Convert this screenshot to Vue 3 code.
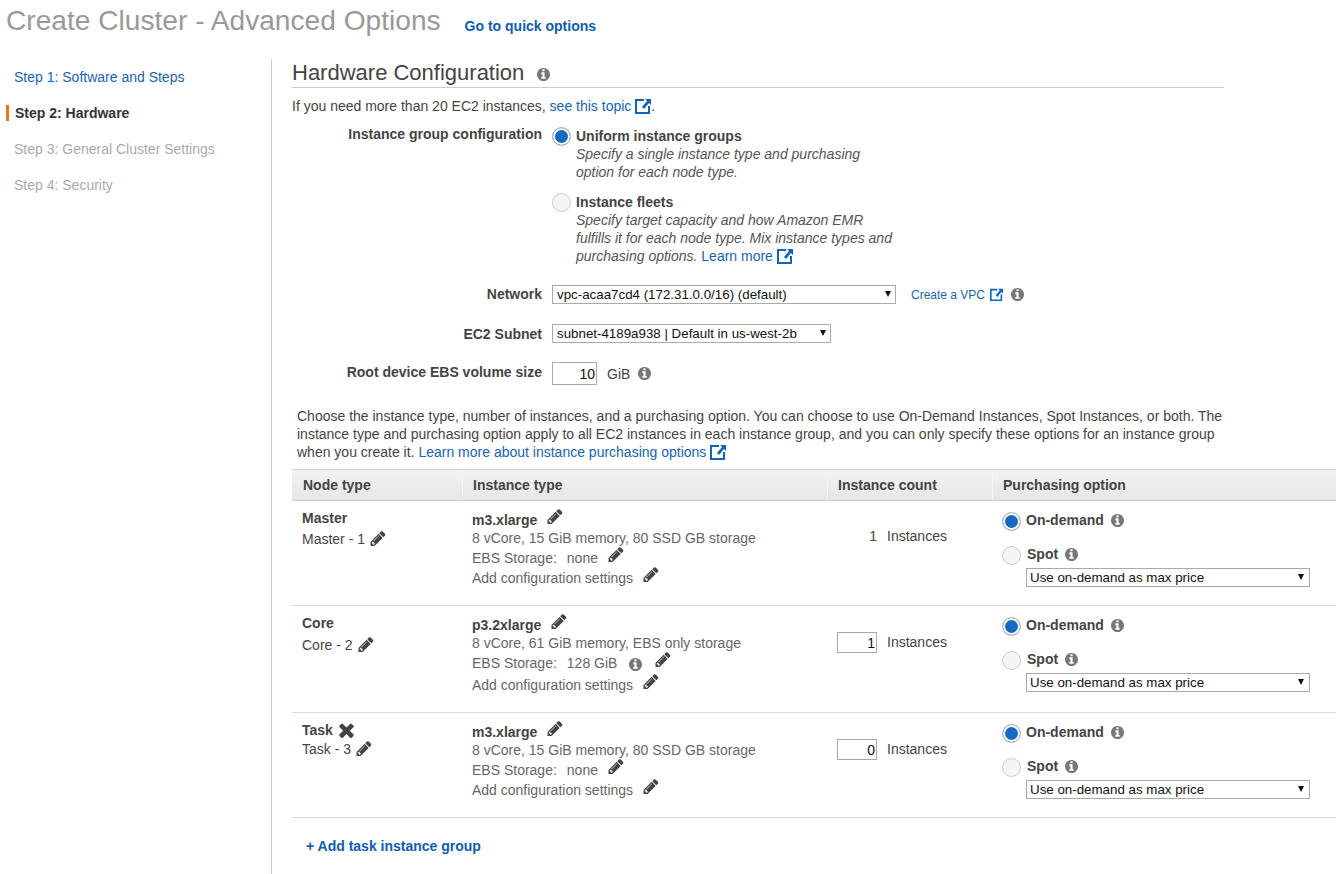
<template>
  <div class="page">
    <header class="top">
      <h1>Create Cluster - Advanced Options</h1>
      <a class="quick">Go to quick options</a>
    </header>

    <div class="layout">
      <nav class="steps">
        <a
          v-for="s in steps"
          :key="s.label"
          class="step"
          :class="s.state"
        >{{ s.label }}</a>
      </nav>

      <main class="content">
        <div class="section-head">
          <h2>Hardware Configuration</h2>
          <svg class="info head-info" viewBox="128 128 1536 1536"><path :d="infoPath" /></svg>
        </div>
        <p class="limit">
          If you need more than 20 EC2 instances, <a class="link">see this topic</a>
          <svg class="ext" viewBox="0 0 16 16"><path :d="extPath" /></svg>.
        </p>

        <div class="form-row group-row">
          <label class="field-label">Instance group configuration</label>
          <div class="options">
            <div class="option">
              <input class="radio" type="radio" name="group" checked />
              <div>
                <div class="opt-title">Uniform instance groups</div>
                <div class="opt-desc">Specify a single instance type and purchasing<br />option for each node type.</div>
              </div>
            </div>
            <div class="option second">
              <input class="radio" type="radio" name="group" />
              <div>
                <div class="opt-title">Instance fleets</div>
                <div class="opt-desc">
                  Specify target capacity and how Amazon EMR<br />
                  fulfills it for each node type. Mix instance types and<br />
                  purchasing options. <a class="link upright">Learn more</a>
                  <svg class="ext" viewBox="0 0 16 16"><path :d="extPath" /></svg>
                </div>
              </div>
            </div>
          </div>
        </div>

        <div class="form-row network-row">
          <label class="field-label">Network</label>
          <div class="select-wrap network">
            <select><option>vpc-acaa7cd4 (172.31.0.0/16) (default)</option></select>
          </div>
          <a class="link small">Create a VPC</a>
          <svg class="ext small-ext" viewBox="0 0 16 16"><path :d="extPath" /></svg>
          <svg class="info vpc-info" viewBox="128 128 1536 1536"><path :d="infoPath" /></svg>
        </div>

        <div class="form-row subnet-row">
          <label class="field-label">EC2 Subnet</label>
          <div class="select-wrap subnet">
            <select><option>subnet-4189a938 | Default in us-west-2b</option></select>
          </div>
        </div>

        <div class="form-row root-row">
          <label class="field-label">Root device EBS volume size</label>
          <input class="num root-num" value="10" />
          <span class="unit">GiB</span>
          <svg class="info" viewBox="128 128 1536 1536"><path :d="infoPath" /></svg>
        </div>

        <p class="intro">
          Choose the instance type, number of instances, and a purchasing option. You can choose to use On-Demand Instances, Spot Instances, or both. The
          instance type and purchasing option apply to all EC2 instances in each instance group, and you can only specify these options for an instance group
          when you create it. <a class="link">Learn more about instance purchasing options</a>
          <svg class="ext" viewBox="0 0 16 16"><path :d="extPath" /></svg>
        </p>

        <div class="table">
          <div class="thead">
            <div class="col-node">Node type</div>
            <div class="col-type">Instance type</div>
            <div class="col-count">Instance count</div>
            <div class="col-buy">Purchasing option</div>
          </div>

          <div
            v-for="n in nodes"
            :key="n.name"
            class="tr"
            :style="{ height: n.height + 'px' }"
          >
            <div class="col-node">
              <div class="node-name">
                {{ n.name }}
                <svg v-if="n.removable" class="remove" viewBox="302 238 1188 1316"><path :d="timesPath" /></svg>
              </div>
              <div class="node-sub" :style="{ marginTop: n.subGap + 'px' }">
                {{ n.sub }}
                <svg class="pencil" viewBox="128 128 1536 1536"><path :d="pencilPath" /></svg>
              </div>
            </div>

            <div class="col-type">
              <div class="type-name">
                {{ n.type }}
                <svg class="pencil" viewBox="128 128 1536 1536"><path :d="pencilPath" /></svg>
              </div>
              <div class="spec">{{ n.spec }}</div>
              <div class="ebs" :class="{ tall: n.ebsInfo }">
                <span>EBS Storage:</span>
                <span class="ebs-val">{{ n.ebs }}</span>
                <svg v-if="n.ebsInfo" class="info ebs-info" viewBox="128 128 1536 1536"><path :d="infoPath" /></svg>
                <svg class="pencil" viewBox="128 128 1536 1536"><path :d="pencilPath" /></svg>
              </div>
              <div class="conf">
                Add configuration settings
                <svg class="pencil" viewBox="128 128 1536 1536"><path :d="pencilPath" /></svg>
              </div>
            </div>

            <div class="col-count" :class="{ editable: !n.fixed }">
              <span v-if="n.fixed" class="fixed-count">{{ n.count }}</span>
              <input v-else class="num count-num" :value="n.count" />
              <span class="unit">Instances</span>
            </div>

            <div class="col-buy">
              <div class="buy-line">
                <input class="radio" type="radio" :name="'buy' + n.name" checked />
                <span class="buy-label">On-demand</span>
                <svg class="info" viewBox="128 128 1536 1536"><path :d="infoPath" /></svg>
              </div>
              <div class="buy-line spot">
                <input class="radio" type="radio" :name="'buy' + n.name" />
                <span class="buy-label">Spot</span>
                <svg class="info" viewBox="128 128 1536 1536"><path :d="infoPath" /></svg>
              </div>
              <div class="select-wrap price">
                <select><option>Use on-demand as max price</option></select>
              </div>
            </div>
          </div>
        </div>

        <a class="add-group">+ Add task instance group</a>
      </main>
    </div>
  </div>
</template>

<script setup>
const steps = [
  { label: 'Step 1: Software and Steps', state: 'done' },
  { label: 'Step 2: Hardware', state: 'active' },
  { label: 'Step 3: General Cluster Settings', state: 'todo' },
  { label: 'Step 4: Security', state: 'todo' }
]

const nodes = [
  {
    name: 'Master',
    sub: 'Master - 1',
    type: 'm3.xlarge',
    spec: '8 vCore, 15 GiB memory, 80 SSD GB storage',
    ebs: 'none',
    count: 1,
    fixed: true,
    subGap: 2,
    height: 105
  },
  {
    name: 'Core',
    sub: 'Core - 2',
    type: 'p3.2xlarge',
    spec: '8 vCore, 61 GiB memory, EBS only storage',
    ebs: '128 GiB',
    ebsInfo: true,
    count: 1,
    subGap: 3,
    height: 107
  },
  {
    name: 'Task',
    sub: 'Task - 3',
    type: 'm3.xlarge',
    spec: '8 vCore, 15 GiB memory, 80 SSD GB storage',
    ebs: 'none',
    count: 0,
    removable: true,
    subGap: 0,
    height: 105
  }
]

const infoPath =
  'M1152 1376v-160q0-14-9-23t-23-9h-96v-512q0-14-9-23t-23-9h-320q-14 0-23 9t-9 23v160q0 14 9 23t23 9h96v320h-96q-14 0-23 9t-9 23v160q0 14 9 23t23 9h448q14 0 23-9t9-23zm-128-896v-160q0-14-9-23t-23-9h-192q-14 0-23 9t-9 23v160q0 14 9 23t23 9h192q14 0 23-9t9-23zm640 416q0 209-103 385.5t-279.5 279.5-385.5 103-385.5-103-279.5-279.5-103-385.5 103-385.5 279.5-279.5 385.5-103 385.5 103 279.5 279.5 103 385.5z'
const pencilPath =
  'M491 1536l91-91-235-235-91 91v107h128v128h107zm523-928q0-22-22-22-10 0-17 7l-542 542q-7 7-7 17 0 22 22 22 10 0 17-7l542-542q7-7 7-17zm-54-192l416 416-832 832h-416v-416zm683 96q0 53-37 90l-166 166-416-416 166-165q36-38 90-38 53 0 91 38l235 234q37 39 37 91z'
const timesPath =
  'M1490 1322q0 40-28 68l-136 136q-28 28-68 28t-68-28l-294-294-294 294q-28 28-68 28t-68-28l-136-136q-28-28-28-68t28-68l294-294-294-294q-28-28-28-68t28-68l136-136q28-28 68-28t68 28l294 294 294-294q28-28 68-28t68 28l136 136q28 28 28 68t-28 68l-294 294 294 294q28 28 28 68z'
const extPath =
  'M0 1h9v2H2v11h11V8h2v8H0zM10 1h6v6l-2-2-5 6-2-2 5-6z'
</script>

<style scoped>
.page {
  font-family: "Liberation Sans", Arial, sans-serif;
  font-size: 14px;
  color: #444;
  height: 874px;
  overflow: hidden;
}

.top {
  display: flex;
  align-items: flex-start;
  height: 59px;
  padding-left: 6px;
  box-sizing: border-box;
}

h1 {
  margin: 0;
  font-size: 28.14px;
  font-weight: 400;
  line-height: 42px;
  color: #999;
}

.quick {
  margin: 18px 0 0 24px;
  line-height: 16px;
  font-weight: 700;
  color: #0f5cb0;
}

.layout {
  display: flex;
}

.steps {
  width: 271px;
  height: 815px;
  border-right: 1px solid #ccc;
  flex: none;
}

.step {
  display: block;
  position: relative;
  height: 36px;
  line-height: 36px;
  padding-left: 14px;
}

.step.done {
  color: #1a64ad;
}

.step.active {
  color: #333;
  font-weight: 700;
  padding-left: 15px;
}

.step.active::before {
  content: "";
  position: absolute;
  left: 6px;
  top: 10px;
  width: 3px;
  height: 16px;
  background: #e47911;
}

.step.todo {
  color: #aaa;
}

.content {
  flex: 1;
  min-width: 0;
  padding-left: 20px;
}

.section-head {
  display: flex;
  align-items: center;
  width: 932px;
  height: 29px;
  border-bottom: 1px solid #ccc;
  box-sizing: border-box;
}

h2 {
  margin: 0;
  font-size: 22px;
  font-weight: 400;
  color: #444;
}

.info {
  width: 13px;
  height: 13px;
  fill: #777;
  flex: none;
}

.head-info {
  margin: 2px 0 0 13px;
}

.limit {
  margin: 9px 0 0;
  line-height: 18px;
}

.link {
  color: #1a64ad;
}

.ext {
  width: 16px;
  height: 16px;
  fill: #1166bb;
  vertical-align: -3px;
  margin-left: 4px;
}

.form-row {
  display: flex;
  align-items: flex-start;
}

.field-label {
  width: 250px;
  flex: none;
  text-align: right;
  font-weight: 700;
  line-height: 18px;
  margin-right: 10px;
}

.group-row {
  margin-top: 10px;
}

.radio {
  appearance: none;
  flex: none;
  width: 19px;
  height: 19px;
  margin: 0;
  border: 1px solid #ccc;
  border-radius: 50%;
  background: #f5f5f5;
  box-sizing: border-box;
}

.radio:checked {
  background: #1569c0;
  box-shadow: inset 0 0 0 2px #fff;
  border-color: #bbb;
}

.option {
  display: flex;
  gap: 5px;
  margin-top: 2px;
}

.option.second {
  margin-top: 12px;
}

.opt-title {
  font-weight: 700;
  line-height: 18px;
}

.opt-desc {
  font-style: italic;
  line-height: 18px;
  color: #555;
}

.upright {
  font-style: normal;
}

.network-row {
  margin-top: 20px;
  align-items: center;
}

.network-row .field-label {
  margin-top: -2px;
}

.select-wrap {
  position: relative;
  flex: none;
}

.select-wrap::after {
  content: "";
  position: absolute;
  right: 5px;
  top: 6px;
  border-left: 3.5px solid transparent;
  border-right: 3.5px solid transparent;
  border-top: 6px solid #111;
  pointer-events: none;
}

select {
  appearance: none;
  display: block;
  width: 100%;
  height: 19px;
  padding: 0 0 0 4px;
  border: 1px solid #aaa;
  border-radius: 0;
  background: #fff;
  color: #111;
  font-family: "Liberation Sans", Arial, sans-serif;
  font-size: 13.33px;
  line-height: 17px;
}

.network {
  width: 344px;
}

.subnet {
  width: 279px;
}

.price {
  width: 284px;
  margin-left: 24px;
  margin-top: 2px;
}

.price select {
  padding-left: 3px;
}

.price::after {
  right: 6px;
}

.small {
  font-size: 12px;
  margin-left: 15px;
}

.small-ext {
  width: 13px;
  height: 13px;
  margin-left: 5px;
}

.vpc-info {
  margin-left: 8px;
}

.subnet-row {
  margin-top: 20px;
  align-items: center;
}

.root-row {
  margin-top: 19px;
  align-items: center;
}

.root-row .field-label {
  margin-top: -4px;
}

.num {
  box-sizing: border-box;
  border: 1px solid #aaa;
  border-radius: 0;
  text-align: right;
  padding: 0 1px 0 0;
  color: #111;
  font-family: "Liberation Sans", Arial, sans-serif;
  font-size: 14px;
}

.root-num {
  width: 45px;
  height: 23px;
}

.unit {
  margin-left: 10px;
}

.root-row .info {
  margin-left: 8px;
}

.intro {
  margin: 22px 0 0 5px;
  width: 935px;
  line-height: 18px;
}

.table {
  margin-top: 8px;
}

.thead {
  display: flex;
  height: 32px;
  border-top: 1px solid #ccc;
  border-bottom: 1px solid #ccc;
  box-sizing: border-box;
  background: linear-gradient(#f3f3f3, #e6e6e6);
  font-weight: 700;
  line-height: 30px;
}

.col-node {
  width: 170px;
  padding-left: 10px;
  box-sizing: border-box;
  flex: none;
}

.col-type {
  width: 365px;
  padding-left: 10px;
  box-sizing: border-box;
  flex: none;
}

.col-count {
  width: 165px;
  padding-left: 10px;
  box-sizing: border-box;
  flex: none;
}

.col-buy {
  flex: 1;
  padding-left: 10px;
  box-sizing: border-box;
}

.thead > div + div {
  border-left: 1px solid #f5f5f5;
}

.thead .col-node {
  padding-left: 11px;
}

.tr {
  display: flex;
  border-bottom: 1px solid #ddd;
  box-sizing: border-box;
  padding-top: 8px;
}

.node-name {
  font-weight: 700;
  height: 18px;
  line-height: 18px;
  display: flex;
  align-items: center;
  gap: 5px;
}

.node-sub {
  line-height: 20px;
  display: flex;
  align-items: center;
  gap: 5px;
}

.pencil {
  width: 16px;
  height: 15px;
  fill: #444;
  flex: none;
  margin-top: -7px;
}

.node-sub .pencil {
  margin-top: -2px;
}

.remove {
  width: 17px;
  height: 16px;
  fill: #444;
}

.col-type {
  padding-top: 1px;
}

.thead .col-type {
  padding-top: 0;
}

.type-name {
  display: flex;
  align-items: center;
  gap: 10px;
  height: 19px;
  font-weight: 700;
  line-height: 20px;
}

.spec {
  line-height: 18px;
  margin-bottom: 1px;
  color: #666;
}

.ebs {
  display: flex;
  align-items: center;
  line-height: 20px;
  height: 20px;
  color: #666;
}

.ebs.tall {
  margin-bottom: 2px;
}

.ebs-val {
  margin-left: 10px;
  margin-right: 10px;
}

.ebs-info {
  margin-left: 2px;
  margin-right: 13px;
  margin-top: 3px;
}

.conf {
  display: flex;
  align-items: center;
  gap: 10px;
  line-height: 20px;
  color: #666;
}

.tr .col-count {
  display: flex;
  align-items: flex-start;
  padding-top: 17px;
}

.tr .col-count.editable {
  padding-top: 18px;
}

.fixed-count {
  width: 40px;
  text-align: right;
  line-height: 20px;
}

.count-num {
  width: 40px;
  height: 21px;
}

.col-count .unit {
  line-height: 20px;
}

.col-buy {
  padding-top: 1px;
}

.thead .col-buy {
  padding-top: 0;
}

.buy-line {
  display: flex;
  align-items: center;
  height: 22px;
}

.buy-line .info {
  margin-top: -2px;
}

.buy-line.spot {
  margin-top: 12px;
}

.buy-label {
  font-weight: 700;
  margin: -2px 7px 0 5px;
}

.spot .buy-label {
  margin-left: 6px;
}

.add-group {
  display: inline-block;
  margin: 20px 0 0 14px;
  font-weight: 700;
  color: #0f5cb0;
}
</style>

<style>
html,
body {
  margin: 0;
  background: #fff;
}
</style>
